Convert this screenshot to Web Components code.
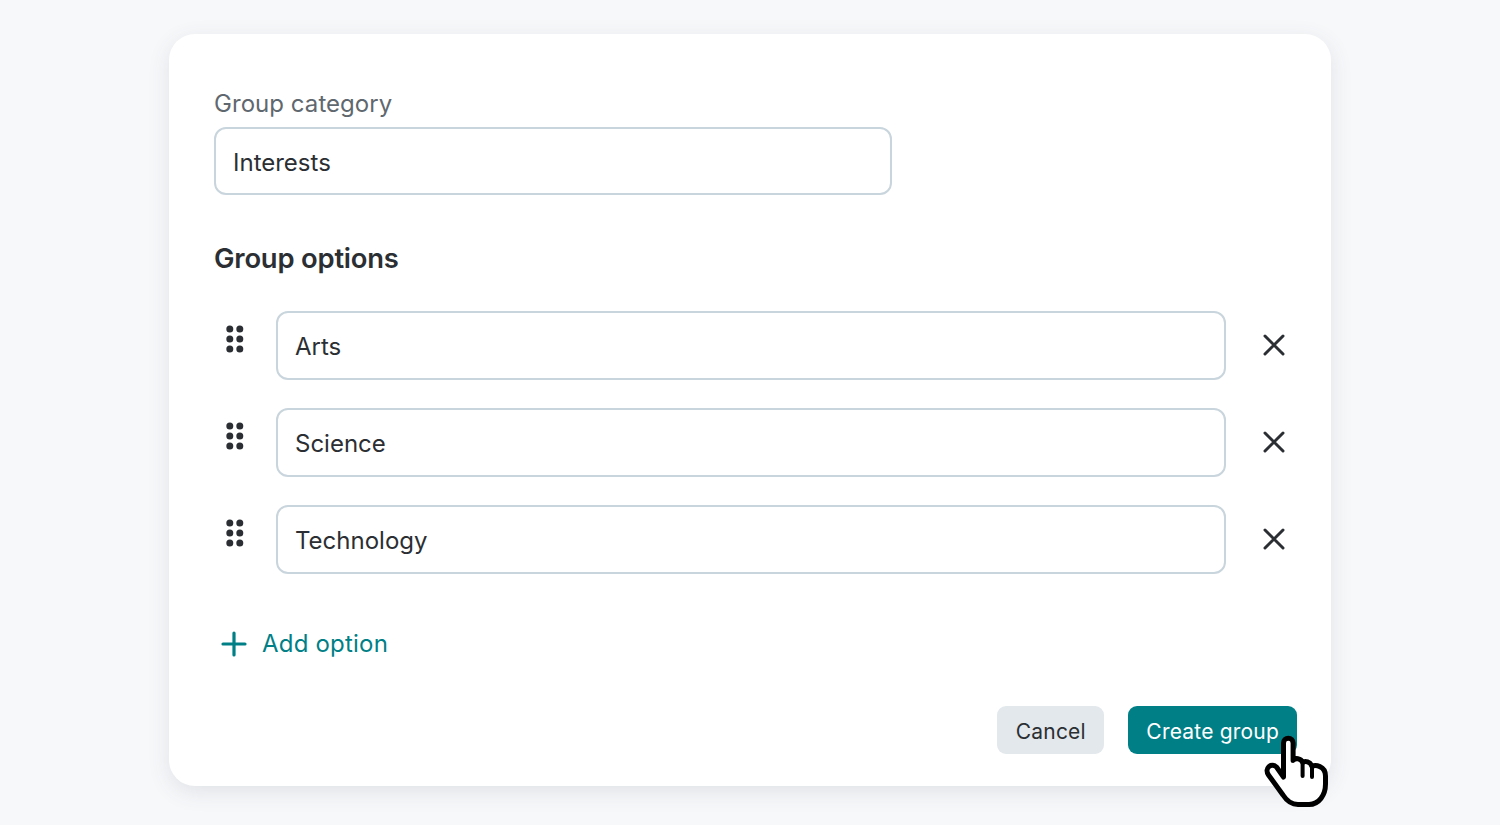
<!DOCTYPE html>
<html>
<head>
<meta charset="utf-8">
<title>Group options</title>
<style>
  html, body { margin: 0; height: 100%; }
  body {
    background: #f7f8fa;
    font-family: Inter, "Liberation Sans", sans-serif;
    font-weight: 370;
    color: #2b2f33;
    overflow: hidden;
  }
</style>
</head>
<body>
<group-form>
  <text-field label="Group category" value="Interests" style="width:678px"></text-field>
  <h2 slot="heading">Group options</h2>
  <option-row value="Arts"></option-row>
  <option-row value="Science"></option-row>
  <option-row value="Technology"></option-row>
</group-form>

<script>
class TextField extends HTMLElement {
  constructor() {
    super();
    let shadowRoot = this.attachShadow({ mode: "open" });
    shadowRoot.innerHTML = `
      <style>
        :host { display: block; }
        .label {
          display: block;
          font-size: 24px;
          line-height: 32px;
          color: #5f686e;
          padding-top: 1px;
          margin-bottom: 6.5px;
          letter-spacing: 0.05px;
        }
        .box {
          box-sizing: border-box;
          height: 68.5px;
          border: 2px solid #c9d5dc;
          border-radius: 12px;
          background: #fff;
          padding: 2.5px 17px 0;
          display: flex;
          align-items: center;
          font-size: 24px;
          color: #2b2f33;
        }
      </style>
      <span class="label" part="label"></span>
      <div class="box"></div>
    `;
    let label = shadowRoot.querySelector(".label");
    if (this.getAttribute("label")) label.textContent = this.getAttribute("label");
    else label.remove();
    shadowRoot.querySelector(".box").textContent = this.getAttribute("value");
  }
}
window.customElements.define("text-field", TextField);

class OptionRow extends HTMLElement {
  constructor() {
    super();
    let shadowRoot = this.attachShadow({ mode: "open" });
    shadowRoot.innerHTML = `
      <style>
        :host {
          display: grid;
          grid-template-columns: 62px 950px 1fr;
          height: 68.5px;
        }
        .drag { padding: 13px 0 0 10.5px; }
        .remove { display: flex; align-items: center; padding: 0 0 1.5px 35.5px; }
        svg { display: block; }
      </style>
      <div class="drag">
        <svg width="20" height="30" viewBox="0 0 20 30" fill="#2b2f33">
          <circle cx="4.8" cy="5" r="3.5"/><circle cx="14.8" cy="5" r="3.5"/>
          <circle cx="4.8" cy="15" r="3.5"/><circle cx="14.8" cy="15" r="3.5"/>
          <circle cx="4.8" cy="25" r="3.5"/><circle cx="14.8" cy="25" r="3.5"/>
        </svg>
      </div>
      <text-field></text-field>
      <div class="remove">
        <svg width="24" height="24" viewBox="0 0 24 24" fill="none" stroke="#2b2f33" stroke-width="3" stroke-linecap="round">
          <path d="M3 3 L21 21 M21 3 L3 21"/>
        </svg>
      </div>
    `;
    // the child has already run its constructor here, so set the text directly
    shadowRoot.querySelector("text-field").shadowRoot.querySelector(".box").textContent = this.getAttribute("value");
  }
}
window.customElements.define("option-row", OptionRow);

class HandCursor extends HTMLElement {
  constructor() {
    super();
    let shadowRoot = this.attachShadow({ mode: "open" });
    shadowRoot.innerHTML = `
      <style>
        :host { display: block; width: 90px; height: 90px; }
        svg { display: block; }
      </style>
      <svg width="90" height="90" viewBox="0 0 90 90">
        <path fill="#fff" stroke="#000" stroke-width="5" stroke-linejoin="round" stroke-linecap="round"
          d="M33.5 51 L33.5 17 A4.8 4.8 0 0 1 43.1 17 L43.1 34.5 C45 31.6 51 32 52.6 36.5 C55 34.6 60.5 35.6 62 40.5 C65 38.6 75.5 39.5 75.5 50 L75.5 58 C75.5 69 69 78.5 59 78.5 L48 78.5 C41 78.5 36.5 74.5 33 69 L18.5 49 C14 42.5 21 36 26.5 41 Z"/>
        <path fill="none" stroke="#000" stroke-width="4" stroke-linecap="round"
          d="M52.6 36.5 L52.6 50 M62 40.5 L62 51"/>
      </svg>
    `;
  }
}
window.customElements.define("hand-cursor", HandCursor);

class AddOption extends HTMLElement {
  constructor() {
    super();
    let shadowRoot = this.attachShadow({ mode: "open" });
    shadowRoot.innerHTML = `
      <style>
        :host {
          display: flex;
          align-items: center;
          gap: 15px;
          padding-left: 7px;
          color: #007f86;
          font-size: 24px;
          line-height: 32px;
          letter-spacing: 0.2px;
        }
        svg { display: block; }
      </style>
      <svg width="26" height="26" viewBox="0 0 26 26" fill="none" stroke="#007f86" stroke-width="3.2" stroke-linecap="round">
        <path d="M13 2 V24 M2 13 H24"/>
      </svg>
      <span><slot>Add option</slot></span>
    `;
  }
}
window.customElements.define("add-option", AddOption);

class ActionButton extends HTMLElement {
  constructor() {
    super();
    let shadowRoot = this.attachShadow({ mode: "open" });
    shadowRoot.innerHTML = `
      <style>
        :host {
          display: flex;
          align-items: center;
          box-sizing: border-box;
          height: 48px;
          padding: 2px 18.5px 0;
          border-radius: 9px;
          font-size: 21px;
          letter-spacing: 0.2px;
          background: #e2e8ec;
          color: #2b2f33;
        }
        :host([primary]) { background: #007f86; color: #fff; padding: 2px 18px 0; }
      </style>
      <slot></slot>
    `;
  }
}
window.customElements.define("action-button", ActionButton);

class GroupForm extends HTMLElement {
  constructor() {
    super();
    let shadowRoot = this.attachShadow({ mode: "open" });
    shadowRoot.innerHTML = `
      <style>
        :host {
          display: block;
          box-sizing: border-box;
          position: relative;
          width: 1162px;
          height: 752px;
          margin: 34px 0 0 169px;
          padding: 53px 45px 0;
          background: #fff;
          border-radius: 26px;
          box-shadow: 0 6px 22px rgba(60, 75, 90, 0.12);
        }
        ::slotted(h2) {
          margin: 45px 0 35px;
          font-size: 27.4px;
          line-height: 36px;
          font-weight: 600;
          letter-spacing: -0.2px;
          color: #2b2f33;
        }
        .rows { display: flex; flex-direction: column; gap: 28.5px; }
        add-option { margin-top: 54.5px; }
        .actions {
          display: flex;
          justify-content: flex-end;
          gap: 24px;
          margin: 46px -11px 0 0;
        }
        hand-cursor { position: absolute; left: 1081px; top: 692px; }
      </style>
      <slot></slot>
      <slot name="heading"></slot>
      <div class="rows"><slot name="rows"></slot></div>
      <add-option></add-option>
      <div class="actions">
        <action-button>Cancel</action-button>
        <action-button primary>Create group</action-button>
      </div>
      <hand-cursor></hand-cursor>
    `;
    this.querySelectorAll("option-row").forEach(r => r.setAttribute("slot", "rows"));
  }
}
window.customElements.define("group-form", GroupForm);
</script>
</body>
</html>
